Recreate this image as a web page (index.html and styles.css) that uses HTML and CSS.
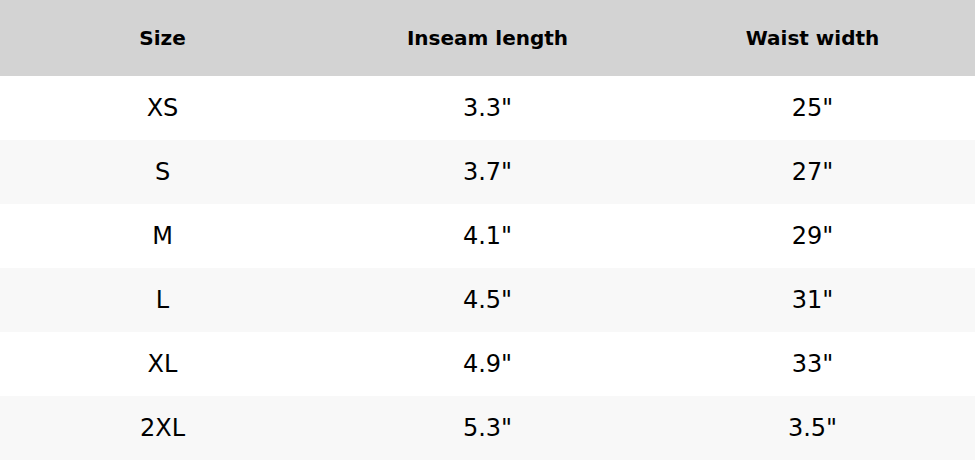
FILE: index.html
```html
<!DOCTYPE html>
<html>
<head>
<meta charset="utf-8">
<link rel="stylesheet" href="styles.css">
</head>
<body>
<table class="size-table">
  <thead>
    <tr><th>Size</th><th>Inseam length</th><th>Waist width</th></tr>
  </thead>
  <tbody>
    <tr><td>XS</td><td>3.3"</td><td>25"</td></tr>
    <tr><td>S</td><td>3.7"</td><td>27"</td></tr>
    <tr><td>M</td><td>4.1"</td><td>29"</td></tr>
    <tr><td>L</td><td>4.5"</td><td>31"</td></tr>
    <tr><td>XL</td><td>4.9"</td><td>33"</td></tr>
    <tr><td>2XL</td><td>5.3"</td><td>3.5"</td></tr>
  </tbody>
</table>
</body>
</html>
```
FILE: styles.css
```css
html, body {
  margin: 0;
  padding: 0;
  background: #ffffff;
}
.size-table {
  width: 975px;
  border-collapse: collapse;
  table-layout: fixed;
  font-family: "DejaVu Sans", sans-serif;
  color: #000;
}
.size-table th {
  background: #d3d3d3;
  height: 76px;
  padding: 0;
  font-size: 20px;
  font-weight: bold;
  text-align: center;
}
.size-table td {
  height: 64px;
  padding: 0;
  font-size: 24px;
  text-align: center;
}
.size-table tbody tr:nth-child(even) td {
  background: #f8f8f8;
}
```
